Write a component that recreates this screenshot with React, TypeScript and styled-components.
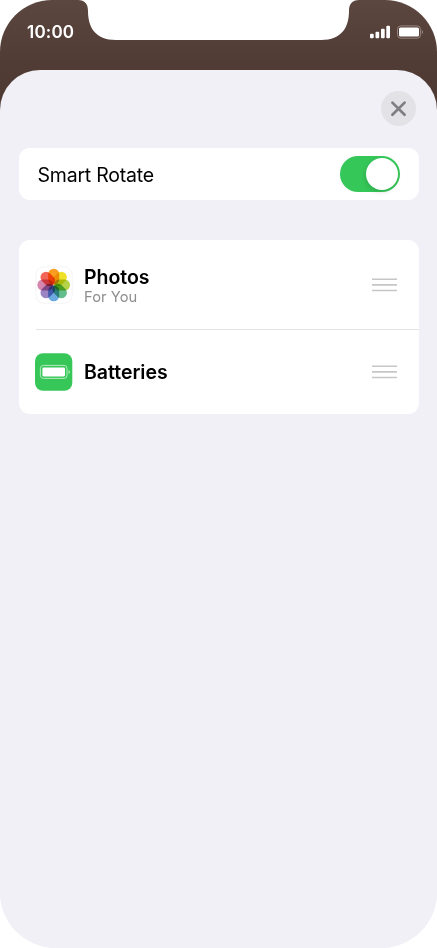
import React, { useState } from "react";
import styled, { createGlobalStyle } from "styled-components";

const GlobalStyle = createGlobalStyle`
  html, body { margin: 0; background: #fff; }
  * { box-sizing: border-box; }
  body { font-family: Inter, "Liberation Sans", sans-serif; color: #000; }
  button { font: inherit; padding: 0; border: 0; cursor: pointer; }
`;

const Phone = styled.main`
  position: relative;
  display: flex;
  flex-direction: column;
  width: 437px;
  height: 948px;
  overflow: hidden;
  border-radius: 52px 52px 56px 56px;
  background: linear-gradient(#5c4640 0, #503c34 65px, #4d3932 116px, #f1f0f6 116px);
`;

const Notch = styled.svg`
  position: absolute;
  top: 0;
  left: 78px;
  width: 281px;
  height: 41px;
`;

const StatusBar = styled.header`
  display: flex;
  flex: none;
  justify-content: space-between;
  height: 70px;
  padding: 22px 13px 0 27px;
`;

const Clock = styled.time`
  height: 20px;
  color: #fff;
  font-size: 17px;
  font-weight: 600;
  line-height: 20px;
  letter-spacing: 0.2px;
`;

const StatusIcons = styled.svg`
  width: 55px;
  height: 18px;
`;

const Sheet = styled.section`
  display: flex;
  flex: 1;
  flex-direction: column;
  padding: 21px 18.5px 0 19px;
  border-radius: 40px 40px 0 0;
  background: #f1f0f6;
`;

const CloseButton = styled.button`
  display: grid;
  place-items: center;
  align-self: flex-end;
  width: 35px;
  height: 35px;
  margin-right: 2.5px;
  border-radius: 50%;
  background: #e3e2e7;
`;

const Card = styled.div`
  border-radius: 11px;
  background: #fff;
`;

const SettingCard = styled(Card)`
  display: flex;
  align-items: center;
  justify-content: space-between;
  height: 51.5px;
  margin-top: 22.3px;
  padding: 0 18.5px 0 18.5px;
`;

const SettingLabel = styled.span`
  padding-top: 1px;
  font-size: 19.5px;
  line-height: 24px;
  letter-spacing: -0.21px;
`;

const Toggle = styled.button<{ $on: boolean }>`
  display: flex;
  justify-content: ${({ $on }) => ($on ? "flex-end" : "flex-start")};
  width: 60px;
  height: 36px;
  padding: 2px;
  border-radius: 18px;
  background: ${({ $on }) => ($on ? "#36c759" : "#e5e5ea")};
`;

const Knob = styled.span`
  width: 32px;
  height: 32px;
  border-radius: 50%;
  background: #fff;
  box-shadow: -1px 2px 5px #0002;
`;

const WidgetCard = styled(Card)`
  margin-top: 40.7px;
`;

const WidgetRow = styled.div<{ $height: number }>`
  display: flex;
  align-items: center;
  height: ${({ $height }) => $height}px;
  padding: 0 21.5px 0 16px;
`;

const Divider = styled.div`
  height: 1px;
  margin-left: 17px;
  background: #e3e3e5;
`;

const AppIcon = styled.svg`
  flex: none;
  width: 38px;
  height: 38px;
  margin-right: 11px;
`;

const WidgetText = styled.div`
  flex: 1;
  padding-top: 1px;
`;

const WidgetName = styled.div`
  font-size: 19.5px;
  font-weight: 600;
  line-height: 24px;
  letter-spacing: -0.02px;
`;

const WidgetDetail = styled.div`
  color: #8e8e91;
  font-size: 14.7px;
  line-height: 17px;
  letter-spacing: 0.05px;
`;

const HandleIcon = styled.svg`
  flex: none;
  width: 25px;
  height: 14px;
`;

const petals = ["#fb9d20", "#efe02a", "#b4d348", "#64bd8a", "#6ba9df", "#9a86c4", "#d486ae", "#f26657"];

function PhotosIcon() {
  return (
    <AppIcon viewBox="0 0 38 38">
      <rect x=".8" y=".8" width="36.4" height="36.4" rx="8" fill="#fff" stroke="#f0f0f0" strokeWidth=".8" />
      <g style={{ isolation: "isolate" }}>
        {petals.map((color, i) => (
          <rect
            key={color}
            x="13.2"
            y="2.7"
            width="11"
            height="15.8"
            rx="5.3"
            fill={color}
            transform={`rotate(${i * 45} 18.7 19)`}
            style={{ mixBlendMode: "multiply" }}
          />
        ))}
      </g>
    </AppIcon>
  );
}

function BatteriesIcon() {
  return (
    <AppIcon viewBox="0 0 38 38">
      <rect y=".2" width="37.3" height="37.6" rx="8" fill="#37c759" />
      <rect x="5.4" y="12.4" width="26.6" height="13" rx="3" fill="none" stroke="#b4eac1" strokeWidth="1" />
      <rect x="7.4" y="14.4" width="22.6" height="9" rx="1.3" fill="#fff" />
      <path d="M33.6 16.8v4.2q1.4-.7 1.4-2.1T33.6 16.8Z" fill="#b4eac1" />
    </AppIcon>
  );
}

function ReorderHandle() {
  return (
    <HandleIcon viewBox="0 0 25 14">
      <path d="M0 1.3H25M0 6.9H25M0 12.5H25" stroke="#c6c6c7" strokeWidth="1.6" />
    </HandleIcon>
  );
}

export default function App() {
  const [smartRotate, setSmartRotate] = useState(true);

  return (
    <>
      <GlobalStyle />
      <Phone>
        <StatusBar>
          <Clock>10:00</Clock>
          <StatusIcons viewBox="0 0 55 18">
            <g fill="#fff">
              <rect x="1" y="11.7" width="3.7" height="4.5" rx="1" />
              <rect x="6.5" y="9.8" width="3.7" height="6.4" rx="1" />
              <rect x="12" y="6.8" width="3.7" height="9.4" rx="1" />
              <rect x="17.3" y="3.8" width="3.7" height="12.4" rx="1" />
              <rect x="30" y="5.5" width="20" height="9" rx="1.6" />
            </g>
            <rect x="28.5" y="3.9" width="23" height="12.3" rx="3.4" fill="none" stroke="#95837d" strokeWidth="1" />
            <path d="M52.8 8v4.2q1.3-.7 1.3-2.1T52.8 8Z" fill="#95837d" />
          </StatusIcons>
        </StatusBar>
        <Sheet>
          <CloseButton aria-label="Close">
            <svg width="17" height="17" viewBox="0 0 17 17">
              <path d="M2.4 2.6 14.6 14.8M14.6 2.6 2.4 14.8" fill="none" stroke="#7f7e83" strokeWidth="2.7" strokeLinecap="round" />
            </svg>
          </CloseButton>
          <SettingCard>
            <SettingLabel>Smart Rotate</SettingLabel>
            <Toggle
              $on={smartRotate}
              role="switch"
              aria-label="Smart Rotate"
              aria-checked={smartRotate}
              onClick={() => setSmartRotate(!smartRotate)}
            >
              <Knob />
            </Toggle>
          </SettingCard>
          <WidgetCard>
            <WidgetRow $height={88.5}>
              <PhotosIcon />
              <WidgetText>
                <WidgetName>Photos</WidgetName>
                <WidgetDetail>For You</WidgetDetail>
              </WidgetText>
              <ReorderHandle />
            </WidgetRow>
            <Divider />
            <WidgetRow $height={84}>
              <BatteriesIcon />
              <WidgetText>
                <WidgetName>Batteries</WidgetName>
              </WidgetText>
              <ReorderHandle />
            </WidgetRow>
          </WidgetCard>
        </Sheet>
        <Notch viewBox="0 0 281 41">
          <path d="M0 0C7 0 10 4 10 11C10 27 17 40 38 40H243C264 40 271 27 271 11C271 4 274 0 281 0Z" fill="#fff" />
        </Notch>
      </Phone>
    </>
  );
}
